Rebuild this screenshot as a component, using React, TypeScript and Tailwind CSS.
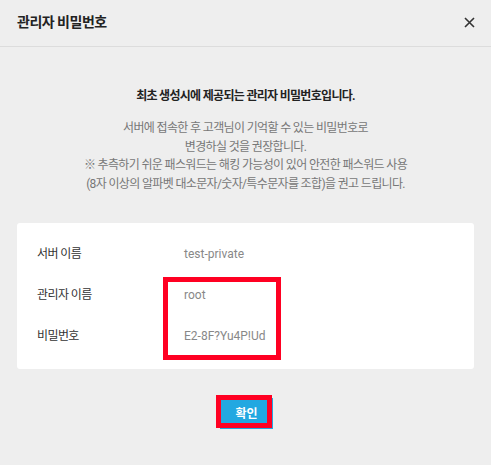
import React from 'react';

const rows = [
  { label: '서버 이름', value: 'test-private' },
  { label: '관리자 이름', value: 'root' },
  { label: '비밀번호', value: 'E2-8F?Yu4P!Ud' },
];

export default function App() {
  return (
    <div
      className="w-[491px] h-[465px] bg-[#eeeeee] text-[#333]"
      style={{ fontFamily: "Roboto, 'Noto Sans CJK KR', sans-serif" }}
    >
      {/* header */}
      <div className="h-[47px] px-[17px] flex items-center justify-between border-b border-[#dcdcdc]">
        <h2 className="text-[14px] font-bold text-[#222] tracking-[-0.5px] -mt-[2px]">관리자 비밀번호</h2>
        <button className="w-[16px] h-[16px] flex items-center justify-center mr-[-3px] -mt-[2px]">
          <svg width="11" height="11" viewBox="0 0 11 11" fill="none">
            <path d="M1 1L10 10M10 1L1 10" stroke="#333" strokeWidth="1.6" />
          </svg>
        </button>
      </div>

      {/* message */}
      <div className="text-center">
        <p className="mt-[39px] text-[12px] leading-[20px] font-bold text-[#222] tracking-[-0.7px]">
          최초 생성시에 제공되는 관리자 비밀번호입니다.
        </p>
        <div className="mt-[13px] text-[12px] leading-[18.5px] text-[#777] tracking-[-0.65px]">
          <p>서버에 접속한 후 고객님이 기억할 수 있는 비밀번호로</p>
          <p>변경하실 것을 권장합니다.</p>
          <p>※ 추측하기 쉬운 패스워드는 해킹 가능성이 있어 안전한 패스워드 사용</p>
          <p>(8자 이상의 알파벳 대소문자/숫자/특수문자를 조합)을 권고 드립니다.</p>
        </div>
      </div>

      {/* info card */}
      <div className="relative mx-[17px] mt-[30px] h-[146px] bg-white rounded-[3px] pt-[10px]">
        {rows.map((row) => (
          <div key={row.label} className="h-[41px] flex items-center text-[12px]">
            <div className="w-[167px] pl-[20px] text-[#333] tracking-[-0.6px]">{row.label}</div>
            <div className="text-[#888]">{row.value}</div>
          </div>
        ))}
        <div className="absolute left-[146px] top-[54px] w-[118px] h-[83px] border-[5px] border-[#ff0022]" />
      </div>

      {/* confirm */}
      <div className="flex justify-center mt-[29px] pl-[2px]">
        <div className="relative">
          <button className="w-[53px] h-[31px] bg-[#22a8e1] text-white text-[12px] font-bold">확인</button>
          <div className="absolute left-[-4px] top-[-3px] w-[56px] h-[33px] border-[5px] border-[#ff0022]" />
        </div>
      </div>
    </div>
  );
}
